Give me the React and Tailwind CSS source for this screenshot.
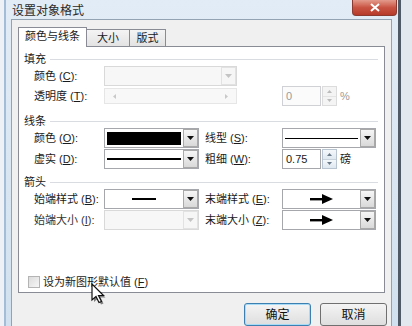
import React from "react";

function Tri({ c = "#000" }) {
  return (
    <svg width="7" height="4" viewBox="0 0 7 4">
      <polygon points="0,0 7,0 3.5,4" fill={c} />
    </svg>
  );
}

function DropBtn({ disabled }) {
  return (
    <div
      className={
        disabled
          ? "w-[15px] h-full border border-[#e2e2e2] bg-[#f6f6f6] flex items-center justify-center"
          : "w-[15px] h-full border border-[#a9a9a9] bg-gradient-to-b from-[#f6f6f6] to-[#d9d9d9] flex items-center justify-center"
      }
    >
      <Tri c={disabled ? "#c4c4c4" : "#111"} />
    </div>
  );
}

function Combo({ w, disabled, children }) {
  return (
    <div
      className={
        (disabled
          ? "border-[#d9d9d9] bg-[#f7f7f7] "
          : "border-[#a5a7ad] bg-white ") +
        "h-[20px] border flex " +
        w
      }
    >
      <div className="flex-1 flex items-center justify-center px-[2px]">
        {children}
      </div>
      <DropBtn disabled={disabled} />
    </div>
  );
}

function Lbl({ t, k, cls = "" }) {
  return (
    <span className={"text-[11px] leading-none text-[#1a1a1a] whitespace-nowrap " + cls}>
      {t} (<span className="underline">{k}</span>):
    </span>
  );
}

function Spin({ value, disabled }) {
  return (
    <div className="flex h-[20px] w-[55px]">
      <div
        className={
          "flex-1 border flex items-center pl-[3px] text-[11px] " +
          (disabled
            ? "border-[#cfd1d5] bg-[#fbfbfb] text-[#9a9a9a]"
            : "border-[#a5a7ad] bg-white text-[#1a1a1a]")
        }
      >
        {value}
      </div>
      <div
        className={
          "w-[15px] ml-px flex flex-col border " +
          (disabled ? "border-[#dcdcdc]" : "border-[#b8c4d0]")
        }
      >
        <div
          className={
            "flex-1 flex items-center justify-center border-b " +
            (disabled ? "border-[#e4e4e4] bg-[#f4f4f4]" : "border-[#c8d2dc] bg-gradient-to-b from-[#f4f8fb] to-[#dfe8f0]")
          }
        >
          <svg width="5" height="3" viewBox="0 0 5 3">
            <polygon points="0,3 5,3 2.5,0" fill={disabled ? "#bbb" : "#6a7a8a"} />
          </svg>
        </div>
        <div
          className={
            "flex-1 flex items-center justify-center " +
            (disabled ? "bg-[#f4f4f4]" : "bg-gradient-to-b from-[#f4f8fb] to-[#dfe8f0]")
          }
        >
          <svg width="5" height="3" viewBox="0 0 5 3">
            <polygon points="0,0 5,0 2.5,3" fill={disabled ? "#bbb" : "#6a7a8a"} />
          </svg>
        </div>
      </div>
    </div>
  );
}

function Header({ t, cls = "" }) {
  return (
    <div className={"flex items-center h-[14px] pl-[5px] pr-[6px] " + cls}>
      <span className="text-[11px] leading-none text-[#1a1a1a]">{t}</span>
      <div className="flex-1 h-px bg-[#d9dde2] ml-[4px]" />
    </div>
  );
}

function Arrow() {
  return (
    <svg width="23" height="10" viewBox="0 0 23 10">
      <rect x="0" y="4" width="13" height="2.4" fill="#000" />
      <polygon points="12,0 23,5 12,10" fill="#000" />
    </svg>
  );
}

export default function App() {
  return (
    <div className="relative w-[412px] h-[326px] overflow-hidden flex font-[family-name:Liberation_Sans,Noto_Sans_CJK_SC,sans-serif] bg-[#e9eef4]">
      <div className="w-[4px] bg-[#eef2f6]" />
      <div className="w-[2px] bg-[#a4bdd6]" />
      <div className="w-[392px] flex flex-col bg-gradient-to-b from-[#e2ecf6] to-[#d2e1ef]">
        {/* title bar */}
        <div className="h-[23px] flex items-start justify-between pl-[6px] pr-[1px]">
          <span className="text-[12px] leading-none mt-[5px] text-[#2a2a2a]">设置对象格式</span>
          <div className="w-[45px] h-[16px] rounded-b-[4px] border border-t-0 border-[#8c3a30] bg-gradient-to-b from-[#e39a8c] via-[#c95443] to-[#b63a2a] flex items-center justify-center">
            <svg width="10" height="9" viewBox="0 0 10 9">
              <path d="M1 1 L9 8 M9 1 L1 8" stroke="#fff" strokeWidth="2" />
            </svg>
          </div>
        </div>
        {/* client */}
        <div className="flex-1 ml-[5px] mr-[6px] border border-b-0 border-[#93a3b4] bg-[#f0f0f0] pt-[7px] pl-[6px] pr-[4px] flex flex-col">
          {/* tabs */}
          <div className="flex items-end h-[19px]">
            <div className="relative z-10 -mb-px h-[20px] w-[69px] border border-b-0 border-[#898c95] bg-white flex items-center justify-center">
              <span className="text-[11px] leading-none text-[#1a1a1a] -mt-[2px]">颜色与线条</span>
            </div>
            <div className="-ml-px h-[17px] w-[44px] border border-b-0 border-[#898c95] bg-gradient-to-b from-[#f4f4f4] to-[#e3e3e3] flex items-center justify-center">
              <span className="text-[11px] leading-none text-[#1a1a1a]">大小</span>
            </div>
            <div className="-ml-px h-[17px] w-[37px] border border-b-0 border-[#898c95] bg-gradient-to-b from-[#f4f4f4] to-[#e3e3e3] flex items-center justify-center">
              <span className="text-[11px] leading-none text-[#1a1a1a]">版式</span>
            </div>
          </div>
          {/* panel */}
          <div className="w-[367px] h-[247px] border border-[#898c95] bg-white flex flex-col">
            <Header t="填充" cls="mt-[5px]" />
            <div className="flex items-center h-[20px] pl-[15px]">
              <Lbl t="颜色" k="C" cls="w-[70px]" />
              <Combo w="w-[133px]" disabled />
            </div>
            <div className="flex items-center h-[20px] pl-[15px]">
              <Lbl t="透明度" k="T" cls="w-[70px]" />
              <div className="w-[133px] h-[16px] border border-[#e6e6e6] bg-[#f8f8f8] flex items-center justify-between px-[8px]">
                <svg width="3" height="5" viewBox="0 0 3 5"><polygon points="3,0 3,5 0,2.5" fill="#c9c9c9" /></svg>
                <svg width="3" height="5" viewBox="0 0 3 5"><polygon points="0,0 0,5 3,2.5" fill="#c9c9c9" /></svg>
              </div>
              <div className="w-[45px]" />
              <Spin value="0" disabled />
              <span className="ml-[3px] text-[11px] text-[#9a9a9a]">%</span>
            </div>

            <Header t="线条" cls="mt-[8px]" />
            <div className="flex items-center h-[20px] pl-[15px]">
              <Lbl t="颜色" k="O" cls="w-[70px]" />
              <Combo w="w-[95px]">
                <div className="w-full h-[13px] bg-black" />
              </Combo>
              <Lbl t="线型" k="S" cls="w-[83px] pl-[6px]" />
              <Combo w="w-[94px]">
                <div className="w-full h-px bg-black" />
              </Combo>
            </div>
            <div className="flex items-center h-[20px] pl-[15px] mt-px">
              <Lbl t="虚实" k="D" cls="w-[70px]" />
              <Combo w="w-[95px]">
                <div className="w-full h-[2px] bg-black" />
              </Combo>
              <Lbl t="粗细" k="W" cls="w-[83px] pl-[6px]" />
              <Spin value="0.75" />
              <span className="ml-[3px] text-[11px] leading-none text-[#1a1a1a]">磅</span>
            </div>

            <Header t="箭头" cls="mt-[6px]" />
            <div className="flex items-center h-[20px] pl-[15px]">
              <Lbl t="始端样式" k="B" cls="w-[70px]" />
              <Combo w="w-[95px]">
                <div className="w-[24px] h-[2px] bg-black" />
              </Combo>
              <Lbl t="末端样式" k="E" cls="w-[83px] pl-[6px]" />
              <Combo w="w-[94px]">
                <Arrow />
              </Combo>
            </div>
            <div className="flex items-center h-[20px] pl-[15px] mt-px">
              <Lbl t="始端大小" k="I" cls="w-[70px] text-[#333]" />
              <Combo w="w-[95px]" disabled />
              <Lbl t="末端大小" k="Z" cls="w-[83px] pl-[6px]" />
              <Combo w="w-[94px]">
                <Arrow />
              </Combo>
            </div>

            <div className="flex items-center h-[14px] pl-[9px] mt-[45px]">
              <div className="w-[12px] h-[12px] border border-[#b4b4b4] bg-gradient-to-br from-[#dcdcdc] to-[#f6f6f6]" />
              <span className="ml-[3px] text-[11px] leading-none text-[#1a1a1a]">
                设为新图形默认值 (<span className="underline">F</span>)
              </span>
            </div>
          </div>
          {/* buttons */}
          <div className="flex justify-end gap-[9px] mt-[10px]">
            <div className="w-[67px] h-[23px] rounded-[3px] border border-[#3c7fb1] shadow-[inset_0_0_0_1px_#a8dcf6] bg-gradient-to-b from-[#f4f4f4] to-[#dedede] flex items-center justify-center">
              <span className="text-[12px] leading-none text-[#111]">确定</span>
            </div>
            <div className="w-[67px] h-[23px] rounded-[3px] border border-[#707070] bg-gradient-to-b from-[#f4f4f4] to-[#dedede] flex items-center justify-center">
              <span className="text-[12px] leading-none text-[#111]">取消</span>
            </div>
          </div>
        </div>
      </div>
      <div className="w-[3px] bg-[#4f5a66]" />
      <div className="flex-1 bg-[#e2e8ee]" />

      {/* mouse cursor */}
      <svg
        className="absolute left-[91px] top-[283px]"
        width="16"
        height="24"
        viewBox="0 0 16 24"
      >
        <path d="M3 3 L3 19 L7 15.5 L10 21.5 L12.5 20.5 L9.5 14.5 L14.5 14.5 Z" fill="#222" opacity="0.55" />
        <path d="M1 1 L1 17 L5 13.5 L8 19.5 L10.5 18.5 L7.5 12.5 L12.5 12.5 Z" fill="#fff" stroke="#111" strokeWidth="1.2" />
      </svg>
    </div>
  );
}
